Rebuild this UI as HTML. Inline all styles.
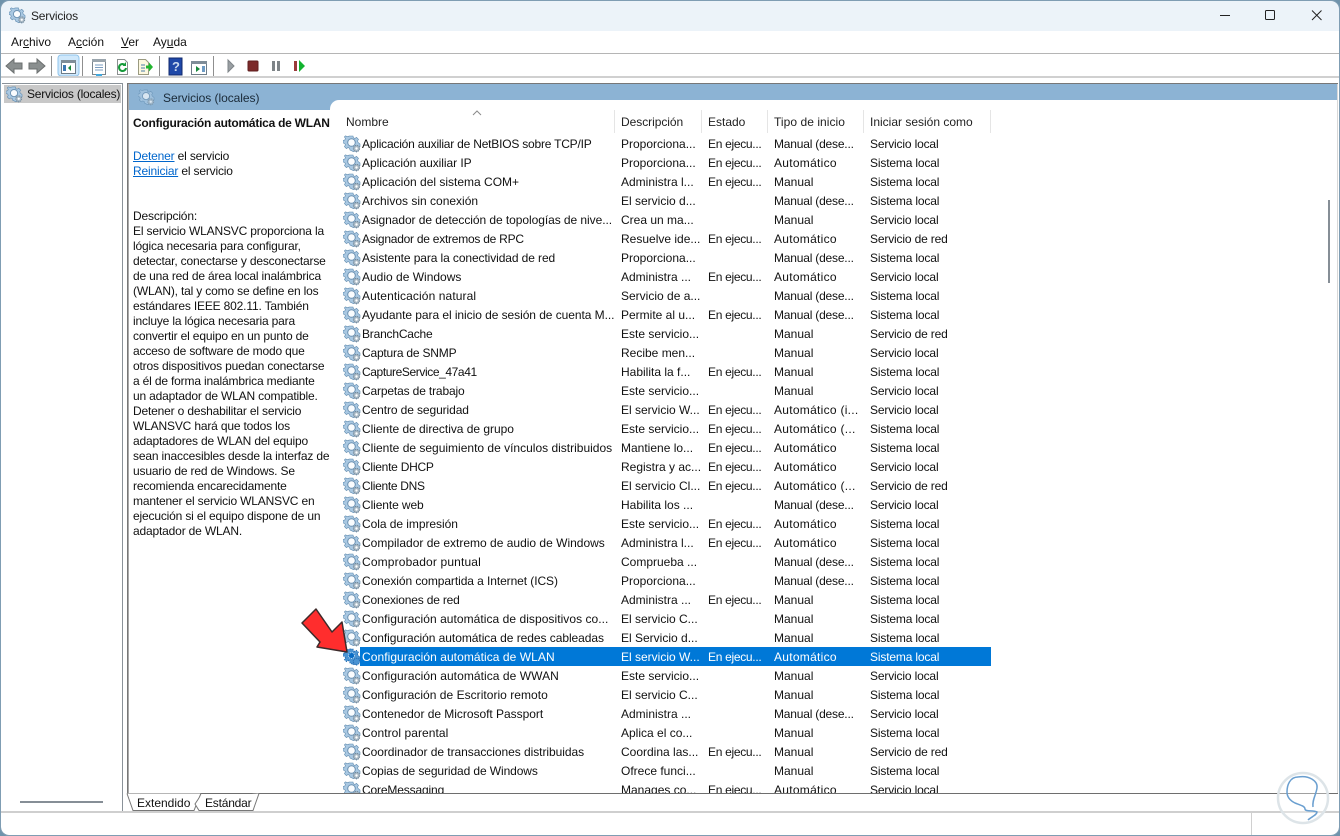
<!DOCTYPE html>
<html lang="es">
<head>
<meta charset="utf-8">
<title>Servicios</title>
<style>
html,body{margin:0;padding:0;width:1340px;height:836px;overflow:hidden;background:#6f93ab}
*{box-sizing:border-box}
body{font:12px/15px "Liberation Sans",sans-serif;color:#000;position:relative}
.a{position:absolute}
#win{left:1px;top:1px;width:1338px;height:834px;background:#fff;border-radius:8px;overflow:hidden}
.t{position:absolute;white-space:nowrap}
u{text-decoration:underline}
#list{position:absolute;left:340px;top:134px;width:660px;height:659px;overflow:hidden}
.r{position:relative;height:19px;white-space:nowrap;line-height:21px;color:#111}
.r svg{position:absolute;left:3px;top:1px;width:18px;height:18px}
.r span{position:absolute;top:0}
.r .n{left:22px}.r .d{left:281px}.r .e{left:368px;letter-spacing:-.3px}.r .s{left:434px}.r .l{left:530px;letter-spacing:-.16px}
.r .s.au{letter-spacing:.28px}.r .s.ma{letter-spacing:-.2px}
.r.sel{color:#fff}
.r.sel:before{content:"";position:absolute;left:20px;top:0;width:631px;height:19px;background:#0078d7}
.h{position:absolute;top:115px;white-space:nowrap;color:#222}
.sep{position:absolute;top:110px;width:1px;height:23px;background:#e5e5e5}
#desc{left:133px;top:209px;width:198px;line-height:15px;color:#111;letter-spacing:-.17px}
#desc div{white-space:nowrap;height:15px}
.tb{position:absolute;width:1px;height:22px;top:56px;background:#8f8f8f}
a{color:#0066cc}
</style>
</head>
<body>
<svg width="0" height="0" style="position:absolute">
<defs>
<symbol id="g" viewBox="0 0 18 18">
<path d="M7 1h3l.4 1.800 1.500.6 1.600-1 2 2-1 1.600.6 1.500L17 9v2.600l-1.800.4-.6 1.500 1 1.600-2 2-1.600-1-1.500.6L7 15 6.600 13.200 5 12.600 3.400 13.600 1.400 11.600 2.400 10l-.6-1.500L0 8V5.400l1.800-.4.6-1.500-1-1.600 1-1 2.200.8 1.500-.6z" fill="#a9c8e2" stroke="#5f8aae" stroke-width=".6"/>
<circle cx="8.500" cy="7.500" r="3.800" fill="#fafcfe" stroke="#6d92b2" stroke-width="1"/>
<circle cx="13.500" cy="13.500" r="3.100" fill="#a8b8c4" stroke="#73899b" stroke-width="1" stroke-dasharray="1.300 .8"/>
<circle cx="13.500" cy="13.500" r="1.200" fill="#fff"/>
</symbol>
<symbol id="gs" viewBox="0 0 18 18">
<path d="M7 1h3l.4 1.800 1.500.6 1.600-1 2 2-1 1.600.6 1.500L17 9v2.600l-1.800.4-.6 1.500 1 1.600-2 2-1.600-1-1.500.6L7 15 6.600 13.200 5 12.600 3.400 13.600 1.400 11.600 2.400 10l-.6-1.500L0 8V5.400l1.800-.4.6-1.500-1-1.600 1-1 2.200.8 1.500-.6z" fill="#4a93d2" stroke="#1c66ad" stroke-width=".8" stroke-dasharray="1.500 1"/>
<circle cx="8.500" cy="7.500" r="3" fill="#0a6cc4" stroke="#d0e4f4" stroke-width="1" stroke-dasharray="1 1"/>
<circle cx="13.500" cy="13.500" r="3.200" fill="#4a93d2" stroke="#1c66ad" stroke-width="1" stroke-dasharray="1 1"/>
</symbol>
</defs>
</svg>

<div id="win" class="a"></div>

<!-- Title bar -->
<div class="a" style="left:1px;top:1px;width:1338px;height:30px;background:#ecf3f9;border-radius:8px 8px 0 0"></div>
<svg class="a" style="left:9px;top:7px;width:17px;height:17px"><use href="#g"/></svg>
<div class="t" style="left:31px;top:9px;color:#222;letter-spacing:-.2px">Servicios</div>
<svg class="a" style="left:1215px;top:10px" width="110" height="12" fill="none" stroke="#222" stroke-width="1">
<path d="M5 5.500H15"/><rect x="50.500" y=".5" width="9" height="9" rx="1"/><path d="M97 0.500L106.500 10M106.500 0.500L97 10"/>
</svg>

<!-- Menu -->
<div class="t" style="left:11px;top:35px;color:#111">Ar<u>c</u>hivo</div>
<div class="t" style="left:68px;top:35px;color:#111">A<u>c</u>ción</div>
<div class="t" style="left:121px;top:35px;color:#111"><u>V</u>er</div>
<div class="t" style="left:153px;top:35px;color:#111">Ay<u>u</u>da</div>
<div class="a" style="left:1px;top:53px;width:1338px;height:1px;background:#b5b5b5"></div>

<!-- Toolbar -->
<svg class="a" style="left:0;top:54px" width="320" height="24">
<path d="M6 12l8-7v4h8v6h-8v4z" fill="#8a8f8f" stroke="#6b6f6f"/>
<path d="M45 12l-8-7v4h-8v6h8v4z" fill="#8a8f8f" stroke="#6b6f6f"/>
<rect x="58" y="1" width="21" height="21" rx="3" fill="#cfe8fb" stroke="#8fc4ec"/>
<rect x="61.500" y="6.500" width="14" height="13" fill="#fff" stroke="#6d7c88"/><rect x="61" y="6" width="15" height="3" fill="#7f8d98"/>
<path d="M71 11v6l-3-3z" fill="#16883a"/><rect x="63" y="11" width="3" height="6" fill="#3d78b3"/>
<rect x="92.500" y="5.500" width="13" height="15" fill="#fff" stroke="#7a858d"/><rect x="92" y="5" width="14" height="3" fill="#9aa5ad"/><path d="M95 11h8M95 13.500h8M95 16h8" stroke="#7a9cc0"/><rect x="96" y="20" width="6" height="2" fill="#3fa9e0"/>
<path d="M117.500 5.500h7l3 3v12h-10z" fill="#fff" stroke="#8a8f8f"/><path d="M126 14a3.500 3.500 0 1 1-1-3" fill="none" stroke="#169a3a" stroke-width="2"/><path d="M126 8v4h-3.500z" fill="#169a3a"/>
<path d="M138.500 5.500h7l3 3v12h-10z" fill="#fdf8df" stroke="#9a9a80"/><path d="M141 11h4M141 14h4M141 17h4" stroke="#4b7ba8"/><path d="M146 11.500h3v-3l4 4.500-4 4.500v-3h-3z" fill="#22b52f"/>
<rect x="169" y="4" width="13" height="17" fill="#1f48a8"/><rect x="169" y="4" width="13" height="17" fill="none" stroke="#10296b"/><text x="172" y="17" font-family="Liberation Sans" font-size="13" font-weight="bold" fill="#c9d8ee">?</text>
<rect x="191.500" y="7.500" width="15" height="13" fill="#fff" stroke="#6d7c88"/><rect x="191" y="7" width="16" height="3" fill="#7f8d98"/><path d="M196 12v6l4-3z" fill="#16883a"/><rect x="202" y="12" width="3" height="6" fill="#6d9bc4"/>
<path d="M228 6l6 6-6 6z" fill="#9a9fa3" stroke="#7e8488"/>
<rect x="248" y="7" width="10" height="10" rx="1" fill="#7c2a2a" stroke="#5f1f1f"/>
<rect x="272" y="7" width="3" height="10" fill="#7e8488"/><rect x="277" y="7" width="3" height="10" fill="#7e8488"/>
<rect x="294" y="7" width="3" height="10" fill="#9a3a3a"/><path d="M299 6l6 6-6 6z" fill="#12b32f"/>
</svg>
<div class="tb" style="left:51px"></div>
<div class="tb" style="left:82px"></div>
<div class="tb" style="left:159px"></div>
<div class="tb" style="left:213px"></div>
<div class="a" style="left:1px;top:76px;width:1338px;height:2px;background:#d0d0d0"></div>

<!-- Left pane -->
<div class="a" style="left:2px;top:83px;width:121px;height:729px;border:1px solid #8a9299;border-left:0"></div>
<div class="a" style="left:4px;top:85px;width:117px;height:18px;background:#c8c8c8"></div>
<svg class="a" style="left:6px;top:86px;width:17px;height:17px"><use href="#g"/></svg>
<div class="t" style="left:27px;top:87px;color:#111;letter-spacing:-.22px">Servicios (locales)</div>
<div class="a" style="left:20px;top:801px;width:83px;height:2px;background:#868e96"></div>

<!-- Right pane -->
<div class="a" style="left:127px;top:83px;width:1px;height:710px;background:#777"></div>
<div class="a" style="left:128px;top:83px;width:1px;height:710px;background:#aaa"></div>
<div class="a" style="left:127px;top:83px;width:1211px;height:1px;background:#777"></div>
<div class="a" style="left:129px;top:84px;width:1208px;height:16px;background:#8cb3d4"></div>
<div class="a" style="left:129px;top:100px;width:201px;height:10px;background:#8cb3d4"></div>
<div class="a" style="left:330px;top:100px;width:10px;height:10px;background:#8cb3d4"></div>
<div class="a" style="left:330px;top:100px;width:20px;height:20px;background:#fff;border-radius:9px 0 0 0"></div>
<div class="a" style="left:340px;top:100px;width:20px;height:10px;background:#fff"></div>
<svg class="a" style="left:138px;top:89px;width:17px;height:17px;opacity:.7"><use href="#g"/></svg>
<div class="t" style="left:163px;top:91px;color:#1a2a38;letter-spacing:-.05px">Servicios (locales)</div>
<div class="a" style="left:1337px;top:84px;width:1px;height:710px;background:#d8d8d8"></div>

<div class="t" style="left:133px;top:116px;font-weight:bold;letter-spacing:-.25px;color:#111">Configuración automática de WLAN</div>
<div class="t" style="left:133px;top:149px;color:#111;letter-spacing:-.17px"><a href="#">Detener</a> el servicio</div>
<div class="t" style="left:133px;top:164px;color:#111;letter-spacing:-.17px"><a href="#">Reiniciar</a> el servicio</div>

<div id="desc" class="a">
<div>Descripción:</div>
<div>El servicio WLANSVC proporciona la</div>
<div>lógica necesaria para configurar,</div>
<div>detectar, conectarse y desconectarse</div>
<div>de una red de área local inalámbrica</div>
<div>(WLAN), tal y como se define en los</div>
<div>estándares IEEE 802.11. También</div>
<div>incluye la lógica necesaria para</div>
<div>convertir el equipo en un punto de</div>
<div>acceso de software de modo que</div>
<div>otros dispositivos puedan conectarse</div>
<div>a él de forma inalámbrica mediante</div>
<div>un adaptador de WLAN compatible.</div>
<div>Detener o deshabilitar el servicio</div>
<div>WLANSVC hará que todos los</div>
<div>adaptadores de WLAN del equipo</div>
<div>sean inaccesibles desde la interfaz de</div>
<div>usuario de red de Windows. Se</div>
<div>recomienda encarecidamente</div>
<div>mantener el servicio WLANSVC en</div>
<div>ejecución si el equipo dispone de un</div>
<div>adaptador de WLAN.</div>
</div>

<!-- Column headers -->
<svg class="a" style="left:472px;top:110px" width="12" height="6" fill="none" stroke="#8a8a8a"><path d="M1 5l4-4 4 4"/></svg>
<div class="h" style="left:346px">Nombre</div>
<div class="h" style="left:621px;letter-spacing:-.05px">Descripción</div>
<div class="h" style="left:708px">Estado</div>
<div class="h" style="left:774px;letter-spacing:.05px">Tipo de inicio</div>
<div class="h" style="left:870px">Iniciar sesión como</div>
<div class="sep" style="left:614px"></div>
<div class="sep" style="left:701px"></div>
<div class="sep" style="left:767px"></div>
<div class="sep" style="left:863px"></div>
<div class="sep" style="left:990px"></div>

<div id="list">
<div class="r"><svg><use href="#g"/></svg><span class="n" style="letter-spacing:-.21px">Aplicación auxiliar de NetBIOS sobre TCP/IP</span><span class="d">Proporciona...</span><span class="e">En ejecu...</span><span class="s ma">Manual (dese...</span><span class="l">Servicio local</span></div>
<div class="r"><svg><use href="#g"/></svg><span class="n" style="letter-spacing:-.05px">Aplicación auxiliar IP</span><span class="d">Proporciona...</span><span class="e">En ejecu...</span><span class="s au">Automático</span><span class="l">Sistema local</span></div>
<div class="r"><svg><use href="#g"/></svg><span class="n">Aplicación del sistema COM+</span><span class="d">Administra l...</span><span class="e">En ejecu...</span><span class="s">Manual</span><span class="l">Sistema local</span></div>
<div class="r"><svg><use href="#g"/></svg><span class="n">Archivos sin conexión</span><span class="d">El servicio d...</span><span class="s ma">Manual (dese...</span><span class="l">Sistema local</span></div>
<div class="r"><svg><use href="#g"/></svg><span class="n" style="letter-spacing:-.06px">Asignador de detección de topologías de nive...</span><span class="d">Crea un ma...</span><span class="s">Manual</span><span class="l">Servicio local</span></div>
<div class="r"><svg><use href="#g"/></svg><span class="n" style="letter-spacing:-.25px">Asignador de extremos de RPC</span><span class="d">Resuelve ide...</span><span class="e">En ejecu...</span><span class="s au">Automático</span><span class="l">Servicio de red</span></div>
<div class="r"><svg><use href="#g"/></svg><span class="n" style="letter-spacing:-.1px">Asistente para la conectividad de red</span><span class="d">Proporciona...</span><span class="s ma">Manual (dese...</span><span class="l">Sistema local</span></div>
<div class="r"><svg><use href="#g"/></svg><span class="n">Audio de Windows</span><span class="d">Administra ...</span><span class="e">En ejecu...</span><span class="s au">Automático</span><span class="l">Servicio local</span></div>
<div class="r"><svg><use href="#g"/></svg><span class="n" style="letter-spacing:.1px">Autenticación natural</span><span class="d">Servicio de a...</span><span class="s ma">Manual (dese...</span><span class="l">Sistema local</span></div>
<div class="r"><svg><use href="#g"/></svg><span class="n" style="letter-spacing:-.06px">Ayudante para el inicio de sesión de cuenta M...</span><span class="d">Permite al u...</span><span class="e">En ejecu...</span><span class="s ma">Manual (dese...</span><span class="l">Sistema local</span></div>
<div class="r"><svg><use href="#g"/></svg><span class="n" style="letter-spacing:-.2px">BranchCache</span><span class="d">Este servicio...</span><span class="s">Manual</span><span class="l">Servicio de red</span></div>
<div class="r"><svg><use href="#g"/></svg><span class="n" style="letter-spacing:-.2px">Captura de SNMP</span><span class="d">Recibe men...</span><span class="s">Manual</span><span class="l">Servicio local</span></div>
<div class="r"><svg><use href="#g"/></svg><span class="n" style="letter-spacing:-.4px">CaptureService_47a41</span><span class="d">Habilita la f...</span><span class="e">En ejecu...</span><span class="s">Manual</span><span class="l">Sistema local</span></div>
<div class="r"><svg><use href="#g"/></svg><span class="n" style="letter-spacing:-.15px">Carpetas de trabajo</span><span class="d">Este servicio...</span><span class="s">Manual</span><span class="l">Servicio local</span></div>
<div class="r"><svg><use href="#g"/></svg><span class="n" style="letter-spacing:-.1px">Centro de seguridad</span><span class="d">El servicio W...</span><span class="e">En ejecu...</span><span class="s au">Automático (i...</span><span class="l">Servicio local</span></div>
<div class="r"><svg><use href="#g"/></svg><span class="n" style="letter-spacing:-.03px">Cliente de directiva de grupo</span><span class="d">Este servicio...</span><span class="e">En ejecu...</span><span class="s au">Automático (...</span><span class="l">Sistema local</span></div>
<div class="r"><svg><use href="#g"/></svg><span class="n">Cliente de seguimiento de vínculos distribuidos</span><span class="d">Mantiene lo...</span><span class="e">En ejecu...</span><span class="s au">Automático</span><span class="l">Sistema local</span></div>
<div class="r"><svg><use href="#g"/></svg><span class="n" style="letter-spacing:-.25px">Cliente DHCP</span><span class="d">Registra y ac...</span><span class="e">En ejecu...</span><span class="s au">Automático</span><span class="l">Servicio local</span></div>
<div class="r"><svg><use href="#g"/></svg><span class="n" style="letter-spacing:-.3px">Cliente DNS</span><span class="d">El servicio Cl...</span><span class="e">En ejecu...</span><span class="s au">Automático (...</span><span class="l">Servicio de red</span></div>
<div class="r"><svg><use href="#g"/></svg><span class="n" style="letter-spacing:-.1px">Cliente web</span><span class="d">Habilita los ...</span><span class="s ma">Manual (dese...</span><span class="l">Servicio local</span></div>
<div class="r"><svg><use href="#g"/></svg><span class="n" style="letter-spacing:-.05px">Cola de impresión</span><span class="d">Este servicio...</span><span class="e">En ejecu...</span><span class="s au">Automático</span><span class="l">Sistema local</span></div>
<div class="r"><svg><use href="#g"/></svg><span class="n">Compilador de extremo de audio de Windows</span><span class="d">Administra l...</span><span class="e">En ejecu...</span><span class="s au">Automático</span><span class="l">Sistema local</span></div>
<div class="r"><svg><use href="#g"/></svg><span class="n" style="letter-spacing:.15px">Comprobador puntual</span><span class="d">Comprueba ...</span><span class="s ma">Manual (dese...</span><span class="l">Sistema local</span></div>
<div class="r"><svg><use href="#g"/></svg><span class="n" style="letter-spacing:-.08px">Conexión compartida a Internet (ICS)</span><span class="d">Proporciona...</span><span class="s ma">Manual (dese...</span><span class="l">Sistema local</span></div>
<div class="r"><svg><use href="#g"/></svg><span class="n" style="letter-spacing:-.18px">Conexiones de red</span><span class="d">Administra ...</span><span class="e">En ejecu...</span><span class="s">Manual</span><span class="l">Sistema local</span></div>
<div class="r"><svg><use href="#g"/></svg><span class="n" style="letter-spacing:.05px">Configuración automática de dispositivos co...</span><span class="d">El servicio C...</span><span class="s">Manual</span><span class="l">Sistema local</span></div>
<div class="r"><svg><use href="#g"/></svg><span class="n" style="letter-spacing:-.05px">Configuración automática de redes cableadas</span><span class="d">El Servicio d...</span><span class="s">Manual</span><span class="l">Sistema local</span></div>
<div class="r sel"><svg><use href="#gs"/></svg><span class="n" style="letter-spacing:.06px">Configuración automática de WLAN</span><span class="d">El servicio W...</span><span class="e">En ejecu...</span><span class="s au">Automático</span><span class="l">Sistema local</span></div>
<div class="r"><svg><use href="#g"/></svg><span class="n" style="letter-spacing:.06px">Configuración automática de WWAN</span><span class="d">Este servicio...</span><span class="s">Manual</span><span class="l">Servicio local</span></div>
<div class="r"><svg><use href="#g"/></svg><span class="n" style="letter-spacing:.03px">Configuración de Escritorio remoto</span><span class="d">El servicio C...</span><span class="s">Manual</span><span class="l">Sistema local</span></div>
<div class="r"><svg><use href="#g"/></svg><span class="n" style="letter-spacing:-.03px">Contenedor de Microsoft Passport</span><span class="d">Administra ...</span><span class="s ma">Manual (dese...</span><span class="l">Servicio local</span></div>
<div class="r"><svg><use href="#g"/></svg><span class="n" style="letter-spacing:.06px">Control parental</span><span class="d">Aplica el co...</span><span class="s">Manual</span><span class="l">Sistema local</span></div>
<div class="r"><svg><use href="#g"/></svg><span class="n" style="letter-spacing:-.05px">Coordinador de transacciones distribuidas</span><span class="d">Coordina las...</span><span class="e">En ejecu...</span><span class="s">Manual</span><span class="l">Servicio de red</span></div>
<div class="r"><svg><use href="#g"/></svg><span class="n" style="letter-spacing:-.1px">Copias de seguridad de Windows</span><span class="d">Ofrece funci...</span><span class="s">Manual</span><span class="l">Sistema local</span></div>
<div class="r"><svg><use href="#g"/></svg><span class="n" style="letter-spacing:-.15px">CoreMessaging</span><span class="d">Manages co...</span><span class="e">En ejecu...</span><span class="s au">Automático</span><span class="l">Servicio local</span></div>
</div>

<!-- Vertical scrollbar -->
<div class="a" style="left:1328px;top:200px;width:2px;height:83px;background:#868e96"></div>

<!-- Arrow -->
<svg class="a" style="left:298px;top:604px" width="64" height="60">
<path d="M18 5L4 19 22 38 19 43 49 48 44 18 34 28z" fill="#ff2d2d" stroke="#3d2a2a" stroke-width="1.500" stroke-linejoin="round"/>
</svg>

<!-- Tabs -->
<div class="a" style="left:127px;top:793px;width:1211px;height:1px;background:#6e6e6e"></div>
<svg class="a" style="left:126px;top:793px" width="135" height="19" fill="#fff" stroke="#777">
<path d="M1 .5L7 17.500H68L73 5 75 .5" fill="#fff"/>
<path d="M73 5L69 11 73 17.500H127L133 .5" fill="#fff"/>
</svg>
<div class="t" style="left:137px;top:796px;color:#111">Extendido</div>
<div class="t" style="left:205px;top:796px;color:#111;letter-spacing:-.2px">Estándar</div>

<!-- Status bar -->
<div class="a" style="left:1px;top:811px;width:1338px;height:2px;background:#cfcfcf"></div>
<div class="a" style="left:1251px;top:813px;width:1px;height:22px;background:#d0d0d0"></div>

<!-- Watermark -->
<svg class="a" style="left:1275px;top:768px" width="58" height="60" fill="none">
<circle cx="28" cy="30" r="25" stroke="#dde4e8" stroke-width="2.500" fill="rgba(255,255,255,.35)"/>
<path d="M23 9C15 9 12 17 12 24 12 30 16 33 20 35 25 37 30 38 30 41 30 44 38 42 42 44 42 47 36 49 33 52" stroke="#6a9fd0" stroke-width="1.500"/>
<path d="M23 9C34 7 43 13 42 20 41 27 37 32 38 39" stroke="#6a9fd0" stroke-width="1.500"/>
</svg>

<!-- Window outline -->
<div class="a" style="left:0;top:0;width:1340px;height:836px;border:1px solid #7f9db3;border-radius:9px;pointer-events:none"></div>
</body>
</html>
